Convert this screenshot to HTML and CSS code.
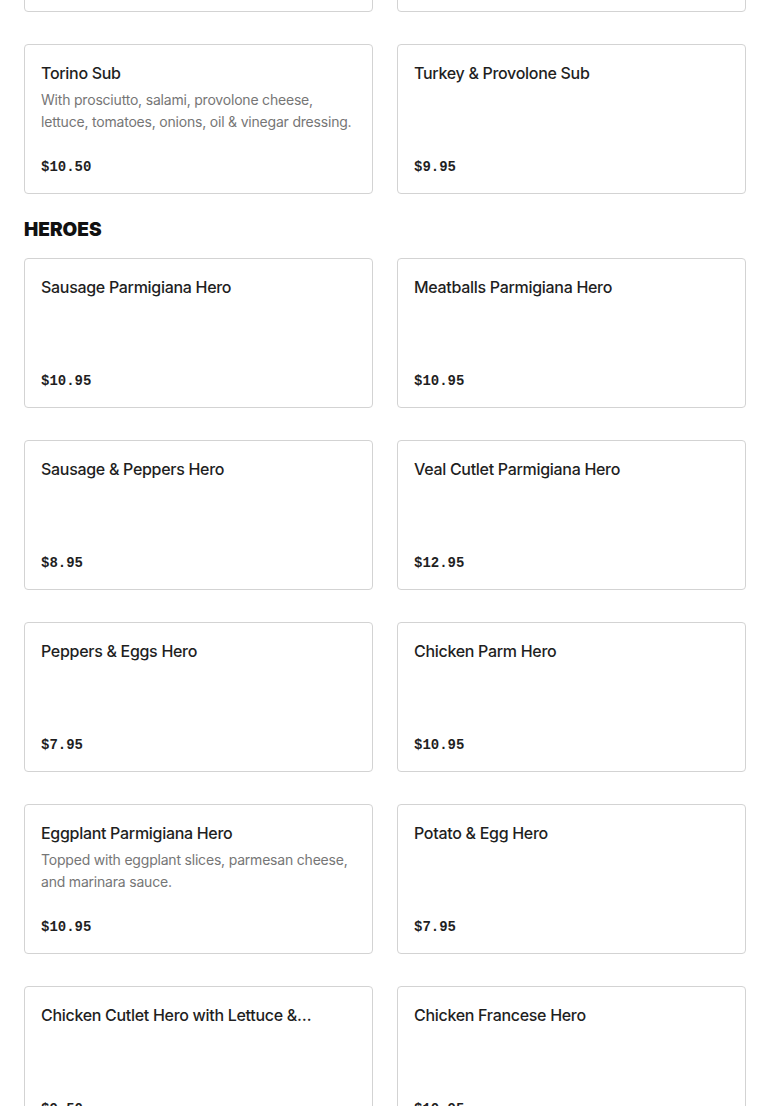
FILE: index.html
```html
<!DOCTYPE html>
<html lang="en">
<head>
<meta charset="utf-8">
<title>Menu</title>
<link rel="stylesheet" href="styles.css">
</head>
<body>
<main class="menu">
  <section class="section section-subs">
    <div class="grid">
      <div class="card"><div class="title">&nbsp;</div><div class="price">&nbsp;</div></div>
      <div class="card"><div class="title">&nbsp;</div><div class="price">&nbsp;</div></div>
      <div class="card">
        <div class="title">Torino Sub</div>
        <div class="desc">With prosciutto, salami, provolone cheese, lettuce, tomatoes, onions, oil &amp; vinegar dressing.</div>
        <div class="price">$10.50</div>
      </div>
      <div class="card">
        <div class="title">Turkey &amp; Provolone Sub</div>
        <div class="price">$9.95</div>
      </div>
    </div>
  </section>
  <section class="section">
    <h2 class="heading">HEROES</h2>
    <div class="grid">
      <div class="card"><div class="title">Sausage Parmigiana Hero</div><div class="price">$10.95</div></div>
      <div class="card"><div class="title">Meatballs Parmigiana Hero</div><div class="price">$10.95</div></div>
      <div class="card"><div class="title">Sausage &amp; Peppers Hero</div><div class="price">$8.95</div></div>
      <div class="card"><div class="title">Veal Cutlet Parmigiana Hero</div><div class="price">$12.95</div></div>
      <div class="card"><div class="title">Peppers &amp; Eggs Hero</div><div class="price">$7.95</div></div>
      <div class="card"><div class="title">Chicken Parm Hero</div><div class="price">$10.95</div></div>
      <div class="card">
        <div class="title">Eggplant Parmigiana Hero</div>
        <div class="desc">Topped with eggplant slices, parmesan cheese, and marinara sauce.</div>
        <div class="price">$10.95</div>
      </div>
      <div class="card"><div class="title">Potato &amp; Egg Hero</div><div class="price">$7.95</div></div>
      <div class="card"><div class="title title-clamp">Chicken Cutlet Hero with Lettuce &amp; Tomato</div><div class="price">$9.50</div></div>
      <div class="card"><div class="title">Chicken Francese Hero</div><div class="price">$10.95</div></div>
    </div>
  </section>
</main>
</body>
</html>
```

FILE: styles.css
```css
html, body {
  margin: 0;
  padding: 0;
  background: #ffffff;
}
body {
  font-family: Inter, "Liberation Sans", sans-serif;
  color: #191919;
  overflow: hidden;
}
.menu {
  padding: 0 24px;
}
.section-subs {
  margin-top: -138px;
}
.grid {
  display: grid;
  grid-template-columns: 1fr 1fr;
  column-gap: 24px;
  row-gap: 32px;
}
.heading {
  margin: 24px 0 16px;
  font-size: 19px;
  line-height: 24px;
  font-weight: 900;
  letter-spacing: 0;
  color: #111111;
}
.card {
  box-sizing: border-box;
  height: 150px;
  border: 1px solid #d3d3d3;
  border-radius: 4px;
  padding: 16px;
  display: flex;
  flex-direction: column;
  min-width: 0;
}
.title {
  font-size: 16px;
  line-height: 24px;
  font-weight: 500;
  letter-spacing: -0.3px;
  color: #1f1f1f;
  display: -webkit-box;
  -webkit-box-orient: vertical;
  -webkit-line-clamp: 1;
  overflow: hidden;
}
.title-clamp {
  padding-right: 30px;
}
.desc {
  margin-top: 4px;
  font-size: 14px;
  line-height: 22px;
  letter-spacing: -0.2px;
  color: #767676;
}
.price {
  margin-top: auto;
  font-family: "Liberation Mono", "DejaVu Sans Mono", monospace;
  font-weight: 700;
  font-size: 14px;
  line-height: 20px;
  color: #1f1f1f;
}
```
